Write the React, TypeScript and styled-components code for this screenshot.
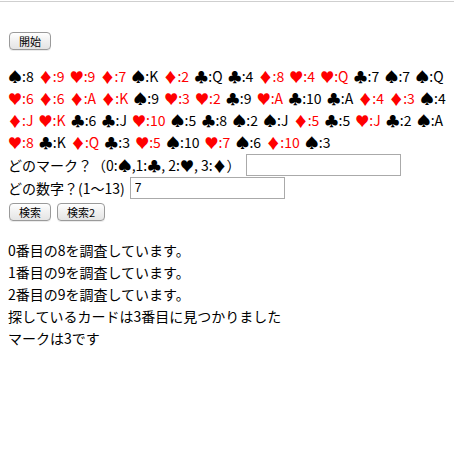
import React from "react";
import styled, { createGlobalStyle } from "styled-components";

const Global = createGlobalStyle`
  html, body { margin: 0; padding: 0; background: #fff; }
  body {
    font-family: "Noto Sans CJK JP", sans-serif;
    font-size: 14px;
    color: #000;
  }
`;

const Rule = styled.div`
  margin-top: 1px;
  height: 1px;
  background: #cfcfcf;
`;

const Page = styled.div`
  padding: 0 8px;
  display: flex;
  flex-direction: column;
  align-items: flex-start;
`;

const Btn = styled.button`
  height: 18px;
  padding: 0 9px;
  font-family: "Noto Sans CJK JP", sans-serif;
  font-size: 11px;
  line-height: 16px;
  color: #000;
  background: linear-gradient(#ffffff, #f0f0f0 50%, #e4e4e4);
  border: 1px solid #9a9a9a;
  border-radius: 4px;
  box-shadow: 0 1px 0 rgba(0, 0, 0, 0.08);
  margin: 0;
`;

const StartBtn = styled(Btn)`
  margin-top: 30px;
  margin-left: 1px;
`;

const Cards = styled.div`
  margin-top: 15px;
  width: 100%;
`;

const CardRow = styled.div`
  white-space: nowrap;
  line-height: 22px;
  height: 22px;
  font-family: "Noto Sans CJK JP", sans-serif;
  font-size: 14px;
  word-spacing: 2px;
`;

const Card = styled.span<{ $red: boolean }>`
  color: ${(p) => (p.$red ? "#ff0000" : "#000")};
`;

const FormRow = styled.div`
  display: flex;
  align-items: center;
  height: 23px;
  white-space: nowrap;
  font-size: 14px;
`;

const Label = styled.span`
  font-family: "Noto Sans CJK JP", sans-serif;
`;

const Input = styled.input<{ $gap: number }>`
  box-sizing: border-box;
  width: 155px;
  height: 22px;
  margin-left: ${(p) => p.$gap}px;
  border: 1px solid #aaaaaa;
  padding: 1px 4px 0;
  font-family: "Liberation Sans", sans-serif;
  font-size: 12px;
  outline: none;
`;

const BtnRow = styled.div`
  display: flex;
  gap: 6px;
  margin-top: 4px;
  margin-left: 1px;
`;

const Results = styled.div`
  margin-top: 18px;
  font-family: "Noto Sans CJK JP", sans-serif;
  font-size: 14px;
  line-height: 22px;
`;

const deck =
  "♠8 ♦9 ♥9 ♦7 ♠K ♦2 ♣Q ♣4 ♦8 ♥4 ♥Q ♣7 ♠7 ♠Q ♥6 ♦6 ♦A ♦K ♠9 ♥3 ♥2 ♣9 ♥A ♣10 ♣A ♦4 ♦3 ♠4 ♦J ♥K ♣6 ♣J ♥10 ♠5 ♣8 ♠2 ♠J ♦5 ♣5 ♥J ♣2 ♠A ♥8 ♣K ♦Q ♣3 ♥5 ♠10 ♥7 ♠6 ♦10 ♠3"
    .split(" ")
    .map((c) => ({ suit: c[0], num: c.slice(1) }));

const rows: { suit: string; num: string }[][] = [];
for (let i = 0; i < deck.length; i += 14) rows.push(deck.slice(i, i + 14));

const results = [
  "0番目の8を調査しています。",
  "1番目の9を調査しています。",
  "2番目の9を調査しています。",
  "探しているカードは3番目に見つかりました",
  "マークは3です",
];

export default function App() {
  return (
    <>
      <Global />
      <Rule />
      <Page>
        <StartBtn>開始</StartBtn>
        <Cards>
          {rows.map((row, ri) => (
            <CardRow key={ri}>
              {row.map((c, ci) => (
                <React.Fragment key={ci}>
                  <Card $red={c.suit === "♦" || c.suit === "♥"}>
                    {c.suit}:{c.num}
                  </Card>{" "}
                </React.Fragment>
              ))}
            </CardRow>
          ))}
        </Cards>
        <FormRow>
          <Label>どのマーク？（0:♠,1:♣, 2:♥, 3:♦）</Label>
          <Input $gap={5} defaultValue="" />
        </FormRow>
        <FormRow>
          <Label>どの数字？(1〜13)</Label>
          <Input $gap={5} defaultValue="7" />
        </FormRow>
        <BtnRow>
          <Btn>検索</Btn>
          <Btn>検索2</Btn>
        </BtnRow>
        <Results>
          {results.map((r, i) => (
            <div key={i}>{r}</div>
          ))}
        </Results>
      </Page>
    </>
  );
}
